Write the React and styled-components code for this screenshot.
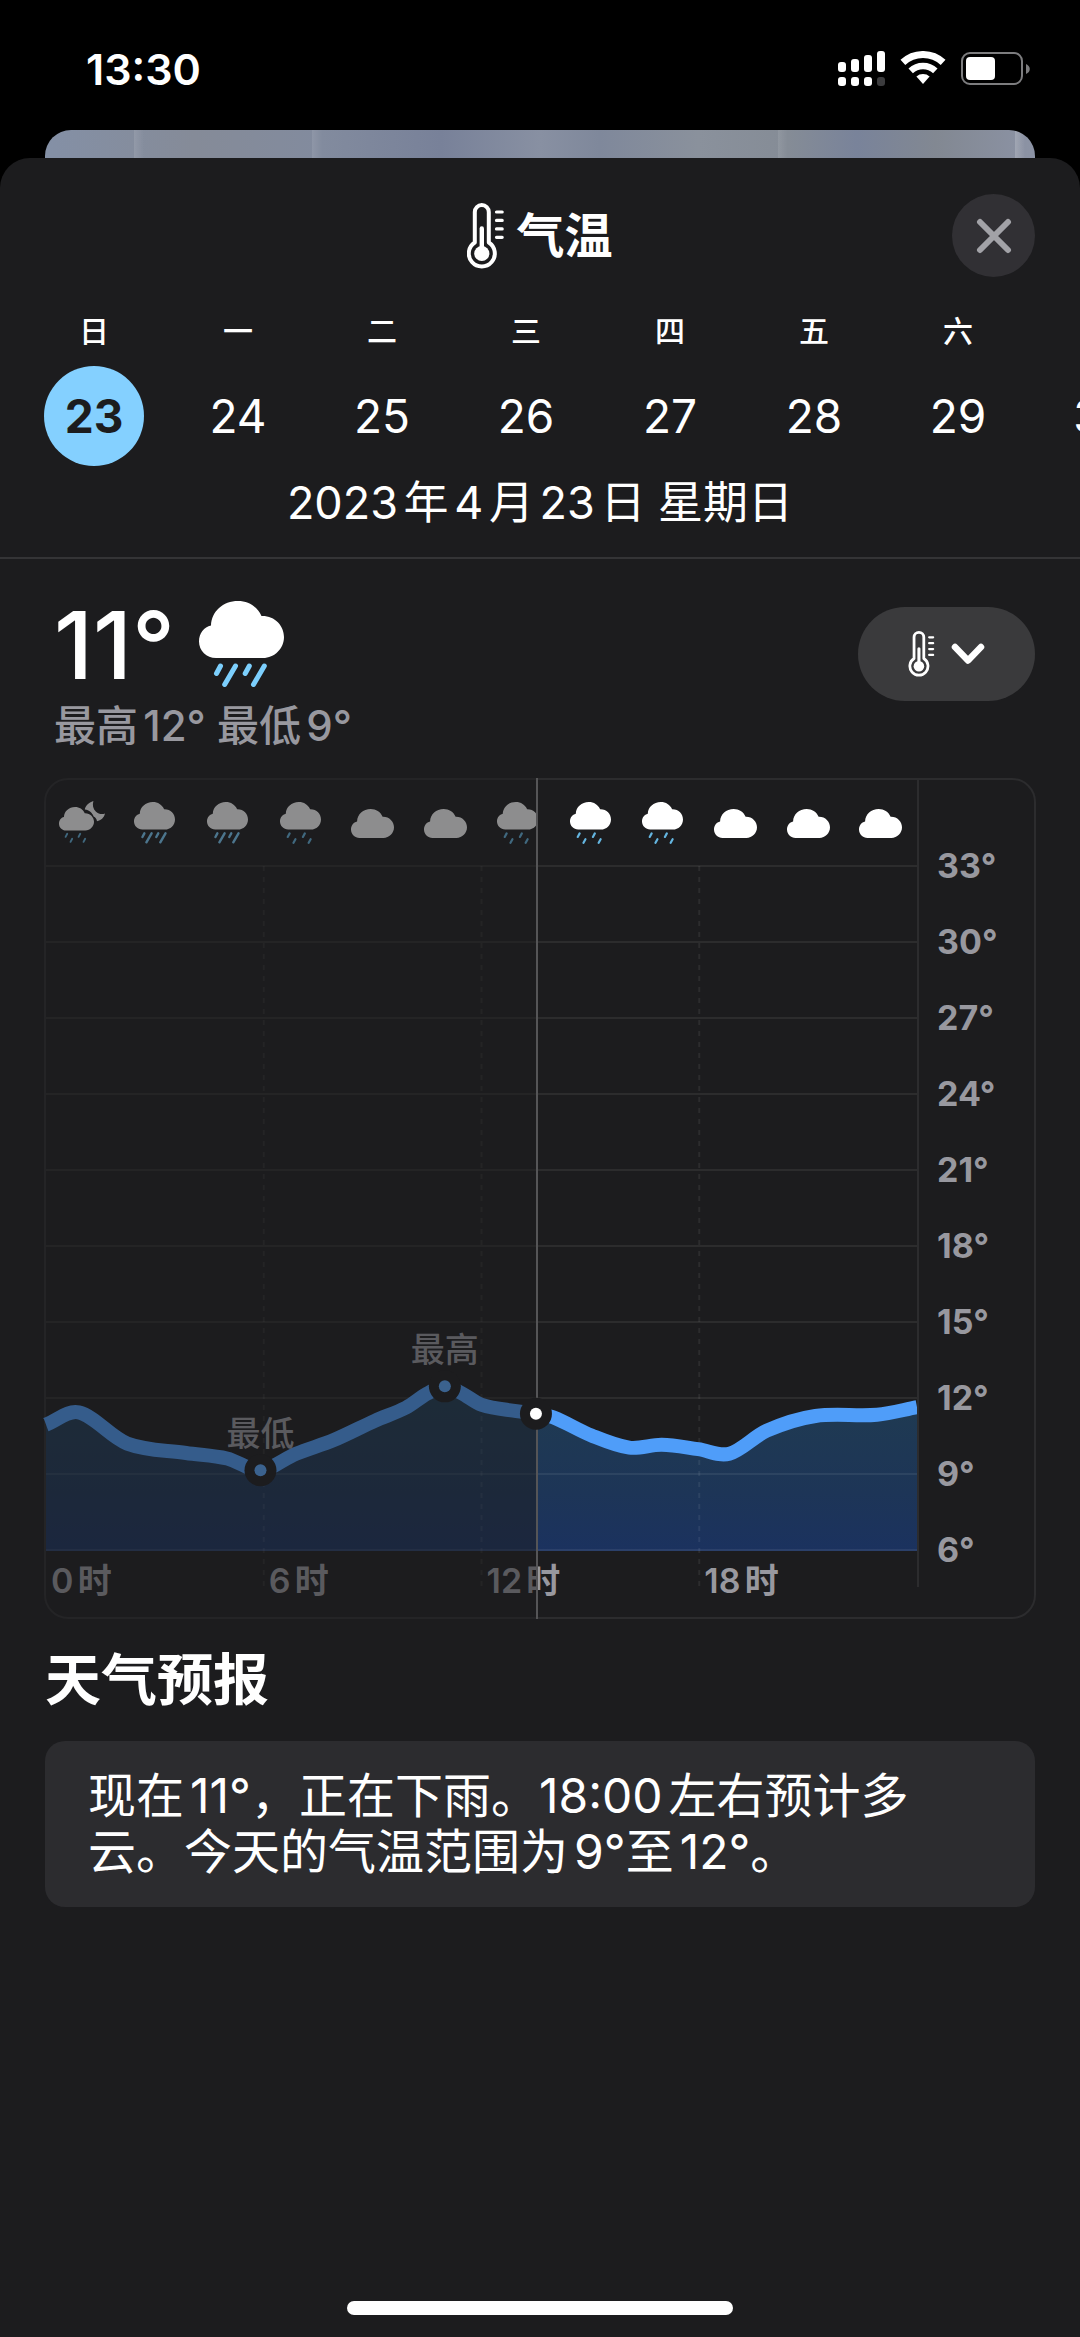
import React from "react";
import styled, { createGlobalStyle } from "styled-components";

const days = [
    { label: "日", date: 23 },
    { label: "一", date: 24 },
    { label: "二", date: 25 },
    { label: "三", date: 26 },
    { label: "四", date: 27 },
    { label: "五", date: 28 },
    { label: "六", date: 29 },
    { label: "日", date: 30 },
];

const hourly = [
    "night",
    "rain",
    "rain",
    "drizzle",
    "cloud",
    "cloud",
    "drizzle",
    "drizzle",
    "drizzle",
    "cloud",
    "cloud",
    "cloud",
];

const scale = [33, 30, 27, 24, 21, 18, 15, 12, 9, 6];

// [hour, degrees]
const temps = [
    [0, 10.95],
    [0.9, 11.43],
    [2.24, 10.2],
    [3.86, 9.83],
    [4.99, 9.61],
    [5.91, 9.15],
    [6.89, 9.8],
    [7.93, 10.34],
    [9.06, 11.1],
    [9.92, 11.62],
    [10.5, 12.17],
    [10.99, 12.46],
    [11.44, 12.2],
    [12.01, 11.73],
    [12.96, 11.48],
    [13.5, 11.38],
    [13.99, 11.23],
    [15.03, 10.52],
    [16.07, 10.04],
    [16.97, 10.15],
    [17.97, 9.98],
    [18.83, 9.8],
    [19.86, 10.71],
    [21.2, 11.29],
    [22.9, 11.34],
    [24, 11.64],
];

const NOW = [13.5, 11.38];
const LOW = [5.91, 9.15];
const HIGH = [10.99, 12.46];

const PLOT_W = 871;
const PLOT_H = 685;
const px = (hour) => (hour / 24) * PLOT_W;
const py = (deg) => ((33 - deg) * 76) / 3;

const smooth = (list) => {
    const pts = list.map(([h, t]) => [px(h), py(t)]);
    let d = `M${pts[0][0]} ${pts[0][1]}`;
    for (let i = 0; i < pts.length - 1; i++) {
        const a = pts[i - 1] || pts[i];
        const b = pts[i];
        const c = pts[i + 1];
        const e = pts[i + 2] || c;
        const k = (c[0] - b[0]) / 3;
        const m1 = (c[1] - a[1]) / (c[0] - a[0]);
        const m2 = (e[1] - b[1]) / (e[0] - b[0]);
        d += ` C${b[0] + k} ${b[1] + m1 * k} ${c[0] - k} ${c[1] - m2 * k} ${c[0]} ${c[1]}`;
    }
    return d;
};

const line = smooth(temps);

const CLOUD =
    "M17 57C7.5 57 0 49.5 0 40.5C0 32.5 5 26 12 24.5C12.5 10.5 24 0 39 0C49.5 0 58 5.5 62.5 15C75.5 14.5 85 24.5 85 36C85 47.5 75.5 57 64 57Z";

const Rain = () => (
    <g stroke="#7ccffd" strokeWidth="5" strokeLinecap="round">
        <path d="M21.5 65L17.5 72.5M36.5 65L25.7 83.5M50.3 65L46.2 72.5M65.3 65L54.5 83.5" />
    </g>
);

const Drizzle = () => (
    <g stroke="#64b5e0" strokeWidth="4.5" strokeLinecap="round">
        <path d="M20 65L16 72.5M32 77L28 84.5M51.5 65L47.5 72.5M63.5 77L59.5 84.5" />
    </g>
);

const WeatherIcon = ({ kind, width }) => {
    if (kind === "night") {
        return (
            <svg width="46" height="44" viewBox="0 0 46 44" fill="#fff">
                <g transform="translate(0 6) scale(0.412)">
                    <path d={CLOUD} />
                    <Drizzle />
                </g>
                <path d="M34.4 0C29.5 1.5 26.3 5 25.8 8.6C30.3 9.2 33.3 12 34.6 15.4C36.6 16.2 37.8 18 38 20.2C42 19.5 45 16.7 46 12.5C43 13.7 39.5 13 37 10.8C34 8 33.2 4 34.4 0Z" />
            </svg>
        );
    }
    const h = kind === "cloud" ? 57 : 87;
    return (
        <svg
            width={width}
            height={Math.round((width * h) / 85)}
            viewBox={`0 0 85 ${h}`}
            fill="#fff"
        >
            <path d={CLOUD} />
            {kind === "rain" && <Rain />}
            {kind === "drizzle" && <Drizzle />}
        </svg>
    );
};

const Thermometer = ({ width, height }) => (
    <svg
        width={width}
        height={height}
        viewBox="0 0 37 66"
        fill="none"
        stroke="#fff"
        strokeLinecap="round"
    >
        <path
            d="M7.8 39.5V9a7 7 0 0 1 14 0V39.5a13 13 0 1 1 -14 0Z"
            strokeWidth="4"
            strokeLinejoin="round"
        />
        <path d="M14.8 25.5V48" strokeWidth="4.4" />
        <circle cx="14.8" cy="50.5" r="7.6" fill="#fff" stroke="none" />
        <path
            d="M29.5 9H35.2M29.5 17.4H35.2M29.5 25.9H35.2M29.5 34.3H35.2"
            strokeWidth="3.2"
        />
    </svg>
);

const StatusIcons = () => (
    <svg width="194" height="36" viewBox="0 0 194 36" fill="#fff">
        <rect x="1" y="11" width="8" height="10" rx="3" />
        <rect x="14" y="8" width="8" height="13" rx="3" />
        <rect x="27" y="4" width="8" height="17" rx="3" />
        <rect x="40" y="0" width="8" height="21" rx="3" />
        <rect x="1" y="26" width="8" height="9" rx="3" />
        <rect x="14" y="26" width="8" height="9" rx="3" />
        <rect x="27" y="26" width="8" height="9" rx="3" />
        <rect x="40" y="26" width="8" height="9" rx="3" fill="#3c3c3e" />
        <g transform="translate(64 0)" stroke="#fff" fill="none">
            <path d="M1.9 11.4A29.5 29.5 0 0 1 42.1 11.4" strokeWidth="7" />
            <path d="M9.7 19.8A18 18 0 0 1 34.3 19.8" strokeWidth="6.5" />
            <path
                d="M22 33L15.4 25.6A10 10 0 0 1 28.6 25.6Z"
                fill="#fff"
                stroke="none"
            />
        </g>
        <rect
            x="125"
            y="2"
            width="60"
            height="31"
            rx="8"
            fill="none"
            stroke="#7d7d7f"
            strokeWidth="2"
        />
        <rect x="129" y="6" width="29" height="23" rx="4" />
        <path d="M189 13C194 15 194 21 189 23Z" fill="#7d7d7f" />
    </svg>
);

const GlobalStyle = createGlobalStyle`
    html, body, #root {
        height: 100%;
    }

    body {
        margin: 0;
        background: #000;
        color: #fff;
        font-family: Inter, "Noto Sans CJK SC", sans-serif;
        text-autospace: normal;
    }

    * {
        box-sizing: border-box;
    }

    svg {
        display: block;
        flex: none;
    }

    button {
        border: 0;
        padding: 0;
        background: none;
        color: inherit;
        font: inherit;
        cursor: pointer;
    }
`;

const Screen = styled.div`
    min-height: 100%;
    display: flex;
    flex-direction: column;
`;

const StatusBar = styled.header`
    display: flex;
    align-items: center;
    justify-content: space-between;
    height: 130px;
    padding: 8px 49px 0 86px;
`;

const Clock = styled.time`
    font-size: 43px;
    font-weight: 600;
    line-height: 48px;
`;

const BehindCard = styled.div`
    height: 28px;
    margin: 0 45px;
    border-radius: 26px 26px 0 0;
    background:
        linear-gradient(90deg, transparent 9%, #ffffff1c 9%, transparent 10%),
        linear-gradient(90deg, transparent 27%, #ffffff18 27%, transparent 28%),
        linear-gradient(90deg, transparent 74%, #ffffff18 74%, transparent 75%),
        linear-gradient(90deg, transparent 98%, #ffffff30 98%, transparent 99%),
        linear-gradient(
            90deg,
            #8490a6,
            #858b98 15%,
            #828b9e 28%,
            #788199 40%,
            #8890a2 50%,
            #7f889b 56%,
            #8a919c 66%,
            #858c96 75%,
            #79839a 82%,
            #828892 90%,
            #8c93a5
        );
`;

const Sheet = styled.main`
    flex: 1;
    display: flex;
    flex-direction: column;
    padding-top: 36px;
    border-radius: 30px 30px 0 0;
    background: #1c1c1e;
`;

const SheetHeader = styled.div`
    display: grid;
    grid-template-columns: 1fr auto 1fr;
    align-items: center;
    padding: 0 45px;
`;

const Title = styled.h1`
    grid-column: 2;
    display: flex;
    align-items: center;
    gap: 12px;
    margin: 0;
    font-size: 48px;
    font-weight: 700;
    line-height: 66px;
`;

const CloseButton = styled.button`
    justify-self: end;
    display: grid;
    place-items: center;
    width: 83px;
    height: 83px;
    border-radius: 50%;
    background: #313034;
`;

const DayStrip = styled.div`
    display: flex;
    gap: 44px;
    margin-top: 34px;
    padding-left: 44px;
    overflow: hidden;
`;

const Day = styled.button`
    flex: none;
    display: flex;
    flex-direction: column;
    align-items: center;
    gap: 15px;
    width: 100px;
    font-size: 30px;
    font-weight: 500;
    line-height: 40px;
`;

const DayNumber = styled.span`
    width: 100px;
    border-radius: 50%;
    background: ${(props) => (props.$active ? "#84d0ff" : "transparent")};
    color: ${(props) => (props.$active ? "#1c1c1e" : "#fff")};
    font-size: 46px;
    font-weight: ${(props) => (props.$active ? 700 : 400)};
    line-height: 100px;
`;

const FullDate = styled.p`
    margin: 0;
    padding: 9px 0 26px;
    border-bottom: 2px solid #343436;
    font-size: 45px;
    line-height: 56px;
    text-align: center;
`;

const Summary = styled.section`
    display: flex;
    justify-content: space-between;
    align-items: flex-start;
    padding: 42px 45px 28px 54px;
`;

const Current = styled.div`
    display: flex;
    align-items: center;
    gap: 24px;
    font-size: 94px;
    font-weight: 500;
    line-height: 86px;
`;

const Range = styled.p`
    margin: 14px 0 0;
    color: #98989f;
    font-size: 42px;
    font-weight: 500;
    line-height: 48px;
`;

const MetricButton = styled.button`
    display: flex;
    align-items: center;
    justify-content: center;
    gap: 16px;
    width: 177px;
    height: 94px;
    margin-top: 6px;
    border-radius: 47px;
    background: #3a3a3c;
`;

const Chart = styled.section`
    position: relative;
    display: grid;
    grid-template-columns: 1fr 117px;
    margin: 0 44px;
    border: 2px solid #2c2c2e;
    border-radius: 24px;
`;

const Plot = styled.div`
    position: relative;
`;

const HourIcons = styled.div`
    display: grid;
    grid-template-columns: repeat(12, 1fr);
    place-items: center;
    height: 86px;
`;

const Graph = styled.div`
    position: relative;

    svg {
        width: 100%;
        height: auto;
        overflow: visible;
    }
`;

const GraphOverlay = styled.div`
    position: absolute;
    inset: 0;
    z-index: 3;
`;

const PointLabel = styled.span`
    position: absolute;
    transform: translate(-50%, -100%);
    padding-bottom: 16px;
    color: #98989f;
    font-size: 34px;
    font-weight: 500;
    line-height: 40px;
`;

const HourLabels = styled.div`
    display: grid;
    grid-template-columns: repeat(4, 1fr);
    height: 66px;
    padding-top: 8px;
    color: #98989f;
    font-size: 34px;
    font-weight: 600;
    line-height: 44px;

    span {
        padding-left: 5px;
    }
`;

const Past = styled.div`
    position: absolute;
    inset: -2px auto -2px -2px;
    z-index: 2;
    border-right: 2px solid #555557;
    background: #1c1c1e80;
`;

const Scale = styled.div`
    position: relative;
    display: flex;
    flex-direction: column;
    padding: 48px 0 0 20px;
    color: #98989f;
    font-size: 34px;
    font-weight: 700;

    &::before {
        content: "";
        position: absolute;
        inset: 0 auto 30px 0;
        width: 2px;
        background: #2c2c2e;
    }

    span {
        line-height: 76px;
    }
`;

const Heading = styled.h2`
    margin: 29px 45px;
    font-size: 56px;
    font-weight: 700;
    line-height: 64px;
`;

const Forecast = styled.p`
    margin: 0 45px;
    padding: 27px 43px;
    border-radius: 20px;
    background: #2c2c2f;
    font-size: 48px;
    line-height: 56px;
`;

const HomeBar = styled.div`
    width: 386px;
    height: 14px;
    margin: auto auto 22px;
    border-radius: 7px;
    background: #fff;
`;

const Dot = ({ point, color }) => (
    <>
        <circle cx={px(point[0])} cy={py(point[1])} r="16" fill="#1c1c1e" />
        <circle cx={px(point[0])} cy={py(point[1])} r="6" fill={color} />
    </>
);

const TemperatureChart = () => (
    <Chart aria-label="气温">
        <Plot>
            <HourIcons>
                {hourly.map((kind, i) => (
                    <WeatherIcon
                        key={i}
                        kind={kind}
                        width={kind === "cloud" ? 43 : 41}
                    />
                ))}
            </HourIcons>
            <Graph>
                <svg viewBox={`0 0 ${PLOT_W} ${PLOT_H}`}>
                    <defs>
                        <linearGradient
                            id="area"
                            gradientUnits="userSpaceOnUse"
                            x1="0"
                            y1="540"
                            x2="0"
                            y2={PLOT_H}
                        >
                            <stop offset="0" stopColor="#1f3a52" />
                            <stop offset="0.6" stopColor="#1d3557" />
                            <stop offset="1" stopColor="#1b325f" />
                        </linearGradient>
                    </defs>
                    <path d={`${line} V${PLOT_H}H0Z`} fill="url(#area)" />
                    <g stroke="#fff" strokeOpacity="0.07" strokeWidth="2">
                        {scale.map((t) => (
                            <path key={t} d={`M0 ${py(t)}H${PLOT_W}`} />
                        ))}
                        {[6, 12, 18].map((h) => (
                            <path
                                key={h}
                                d={`M${px(h)} 0V720`}
                                strokeDasharray="5 6"
                            />
                        ))}
                    </g>
                    <path
                        d={line}
                        fill="none"
                        stroke="#4f9df9"
                        strokeWidth="14"
                    />
                    <Dot point={LOW} color="#5aa8ff" />
                    <Dot point={HIGH} color="#5aa8ff" />
                </svg>
                {[
                    ["最低", LOW],
                    ["最高", HIGH],
                ].map(([text, [h, t]]) => (
                    <PointLabel
                        key={text}
                        style={{
                            left: `${(h / 24) * 100}%`,
                            top: `${(py(t) / PLOT_H) * 100}%`,
                        }}
                    >
                        {text}
                    </PointLabel>
                ))}
                <GraphOverlay>
                    <svg viewBox={`0 0 ${PLOT_W} ${PLOT_H}`}>
                        <Dot point={NOW} color="#fff" />
                    </svg>
                </GraphOverlay>
            </Graph>
            <HourLabels>
                <span>0时</span>
                <span>6时</span>
                <span>12时</span>
                <span>18时</span>
            </HourLabels>
            <Past style={{ width: `calc(${(NOW[0] / 24) * 100}% + 4px)` }} />
        </Plot>
        <Scale>
            {scale.map((t) => (
                <span key={t}>{t}°</span>
            ))}
        </Scale>
    </Chart>
);

const App = () => {
    return (
        <Screen>
            <GlobalStyle />
            <StatusBar>
                <Clock>13:30</Clock>
                <StatusIcons />
            </StatusBar>
            <BehindCard />
            <Sheet>
                <SheetHeader>
                    <Title>
                        <Thermometer width={37} height={66} />
                        气温
                    </Title>
                    <CloseButton aria-label="关闭">
                        <svg
                            width="36"
                            height="36"
                            viewBox="0 0 36 36"
                            stroke="#a2a2a7"
                            strokeWidth="6"
                            strokeLinecap="round"
                        >
                            <path d="M4 4L32 32M32 4L4 32" />
                        </svg>
                    </CloseButton>
                </SheetHeader>
                <DayStrip>
                    {days.map((day) => (
                        <Day key={day.date}>
                            {day.label}
                            <DayNumber $active={day.date === 23}>
                                {day.date}
                            </DayNumber>
                        </Day>
                    ))}
                </DayStrip>
                <FullDate>2023年4月23日 星期日</FullDate>
                <Summary>
                    <div>
                        <Current>
                            11°
                            <WeatherIcon kind="rain" width={85} />
                        </Current>
                        <Range>最高12° 最低9°</Range>
                    </div>
                    <MetricButton aria-label="切换数据">
                        <Thermometer width={27} height={46} />
                        <svg
                            width="34"
                            height="22"
                            viewBox="0 0 34 22"
                            fill="none"
                            stroke="#fff"
                            strokeWidth="6.5"
                            strokeLinecap="round"
                            strokeLinejoin="round"
                        >
                            <path d="M4 4L17 17.5L30 4" />
                        </svg>
                    </MetricButton>
                </Summary>
                <TemperatureChart />
                <Heading>天气预报</Heading>
                <Forecast>
                    现在11°，正在下雨。18:00左右预计多云。今天的气温范围为9°至12°。
                </Forecast>
                <HomeBar />
            </Sheet>
        </Screen>
    );
};

export default App;
